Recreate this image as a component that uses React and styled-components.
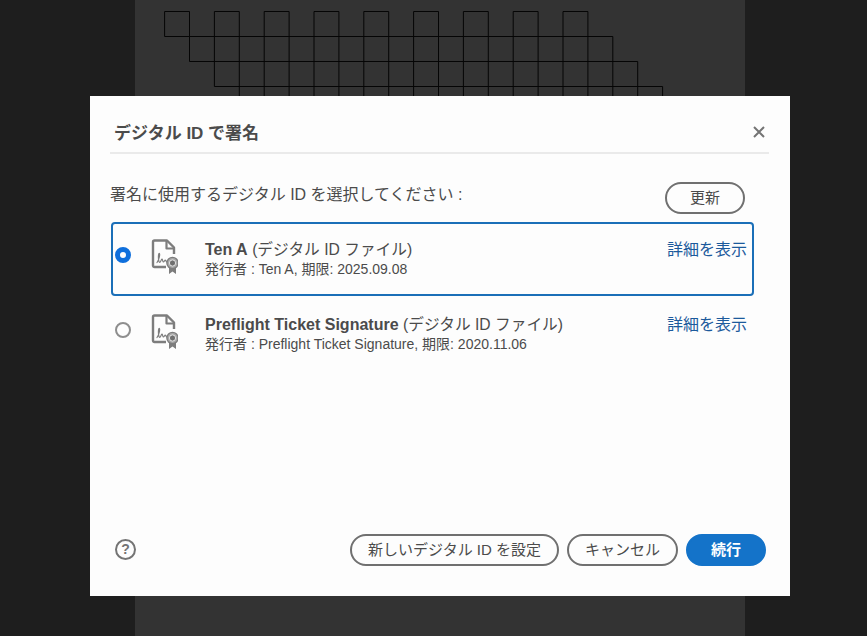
import React from "react";
import styled, { createGlobalStyle } from "styled-components";

const Global = createGlobalStyle`
  html, body { margin: 0; padding: 0; height: 100%; background: #1e1e1e; overflow: hidden; }
  body { font-family: "Liberation Sans", "Noto Sans CJK JP", sans-serif; color: #4b4b4b; }
  #root { height: 100%; }
`;

const Stage = styled.div`
  position: relative;
  width: 867px;
  height: 636px;
  background: #1e1e1e;
  overflow: hidden;
`;
const Page = styled.div`
  width: 610px;
  height: 636px;
  margin-left: 135px;
  background: #333333;
`;
const Sheet = styled.svg`
  display: block;
`;
const Modal = styled.div`
  position: absolute;
  left: 90px;
  top: 96px;
  width: 700px;
  height: 500px;
  background: #fdfdfd;
  display: flex;
  flex-direction: column;
  padding: 0 21px 30px 20px;
  box-sizing: border-box;
`;
const Header = styled.header`
  height: 58px;
  border-bottom: 2px solid #eaeaea;
  display: flex;
  align-items: center;
  justify-content: space-between;
  padding: 14px 2px 0 4px;
  box-sizing: border-box;
`;
const Title = styled.h1`
  margin: 0;
  font-size: 17px;
  font-weight: 700;
  color: #4b4b4b;
`;
const Close = styled.button`
  border: 0;
  background: none;
  padding: 0;
  width: 16px;
  height: 16px;
  display: flex;
  color: #747474;
  margin-top: 2px;
`;
const Prompt = styled.div`
  display: flex;
  align-items: center;
  justify-content: space-between;
  margin-top: 28px;
  padding-right: 24px;
  height: 32px;
`;
const PromptText = styled.span`
  font-size: 16px;
  color: #4b4b4b;
  margin-bottom: 10px;
`;
const Pill = styled.button`
  height: 32px;
  box-sizing: border-box;
  border-radius: 16px;
  border: 2px solid ${p => (p.$primary ? "#1473c9" : "#707070")};
  background: ${p => (p.$primary ? "#1473c9" : "#fdfdfd")};
  color: ${p => (p.$primary ? "#ffffff" : "#4b4b4b")};
  font-family: inherit;
  font-size: 15px;
  font-weight: ${p => (p.$primary ? 700 : 400)};
  width: ${p => p.$w}px;
  padding: 0 0 4px;
  white-space: nowrap;
`;
const List = styled.div`
  display: flex;
  flex-direction: column;
  gap: 1px;
  margin-top: 8px;
  flex: 1;
`;
const Row = styled.div`
  width: 643px;
  height: 74px;
  margin-left: 1px;
  box-sizing: border-box;
  border-radius: 4px;
  border: 2px solid ${p => (p.$selected ? "#1b6fb8" : "transparent")};
  display: flex;
  align-items: flex-start;
  padding: 16px 5px 0 2px;
`;
const Radio = styled.span`
  width: 16px;
  height: 16px;
  box-sizing: border-box;
  border-radius: 50%;
  margin-top: 7px;
  flex: none;
  background: #fdfdfd;
  border: ${p => (p.$on ? "5px solid #0f6fdc" : "2px solid #8e8e8e")};
`;
const Icon = styled.svg`
  flex: none;
  margin: -1px 27px 0 20px;
`;
const Info = styled.div`
  flex: 1;
  display: flex;
  flex-direction: column;
`;
const Name = styled.div`
  font-size: 16px;
  line-height: 20px;
  color: #4b4b4b;
  white-space: nowrap;
`;
const Kind = styled.span`
  font-size: 15.7px;
`;
const Strong = styled.strong`
  font-weight: 700;
`;
const Meta = styled.div`
  font-size: 14px;
  line-height: 18px;
  color: #4b4b4b;
  white-space: nowrap;
`;
const Details = styled.a`
  font-size: 16px;
  line-height: 20px;
  color: #1c5a9c;
  white-space: nowrap;
`;
const Footer = styled.footer`
  display: flex;
  align-items: center;
  gap: 8px;
  padding: 0 3px 0 5px;
`;
const Help = styled.span`
  width: 21px;
  height: 21px;
  box-sizing: border-box;
  border: 2px solid #747474;
  border-radius: 50%;
  color: #747474;
  font-size: 14px;
  font-weight: 700;
  display: flex;
  align-items: center;
  justify-content: center;
  margin: 0 auto 2px 0;
`;

const COL = 24.9;
const X0 = 29.6;
const xs = c => X0 + COL * c;
const ROWS = [11.5, 36.5, 61.5, 86.5, 111.5];

const Grid = () => {
  const d = [];
  for (let c = 0; c <= 16; c += 2) {
    d.push(`M${xs(c)} ${ROWS[0]}H${xs(c + 1)}V${ROWS[1]}H${xs(c)}Z`);
  }
  for (let r = 1; r <= 3; r++) {
    const a = r, b = r + 17;
    d.push(`M${xs(a)} ${ROWS[r]}H${xs(b)}V${ROWS[r + 1]}H${xs(a)}Z`);
    for (let c = a + 1; c < b; c++) d.push(`M${xs(c)} ${ROWS[r]}V${ROWS[r + 1]}`);
  }
  return (
    <Sheet width="610" height="110" viewBox="0 0 610 110">
      <path d={d.join("")} fill="none" stroke="#050505" strokeWidth="1" />
    </Sheet>
  );
};

const CertIcon = () => (
  <Icon width="27" height="36" viewBox="0 0 27 36" fill="none">
    <path d="M23 15V8.5L16 1.5H3.5A1.5 1.5 0 0 0 2 3V26.5A1.5 1.5 0 0 0 3.5 28H15" stroke="#7d7d7d" strokeWidth="2.4" strokeLinejoin="round" />
    <path d="M15.5 2V9.5H23" stroke="#7d7d7d" strokeWidth="2.2" strokeLinejoin="round" />
    <path d="M6 23.5C8 21 9.4 14.6 8.2 14.4C7 14.4 7.2 23.6 8.8 23.4C10 23.2 10 20 11 20.2C11.8 20.4 11.6 23.2 12.6 23C13.4 22.8 13.6 21 14.4 21.2C15 21.4 15 23 16 23" stroke="#7d7d7d" strokeWidth="1.2" strokeLinecap="round" />
    <path d="M18 28V35L21.5 32.5L25 35V28Z" fill="#7d7d7d" />
    <circle cx="21.5" cy="24" r="5.6" fill="#a8a8a8" stroke="#7d7d7d" strokeWidth="1.4" />
    <circle cx="21.5" cy="24" r="3.1" fill="#6f6f6f" stroke="#e4e4e4" strokeWidth="1" />
  </Icon>
);

const ids = [
  { name: "Ten A", meta: "発行者 : Ten A, 期限: 2025.09.08", on: true },
  { name: "Preflight Ticket Signature", meta: "発行者 : Preflight Ticket Signature, 期限: 2020.11.06", on: false },
];

export default function App() {
  return (
    <Stage>
      <Global />
      <Page>
        <Grid />
      </Page>
      <Modal>
        <Header>
          <Title>デジタル ID で署名</Title>
          <Close aria-label="閉じる">
            <svg width="16" height="16" viewBox="0 0 16 16">
              <path d="M3 3L13 13M13 3L3 13" stroke="currentColor" strokeWidth="2" />
            </svg>
          </Close>
        </Header>
        <Prompt>
          <PromptText>署名に使用するデジタル ID を選択してください :</PromptText>
          <Pill $w={80}>更新</Pill>
        </Prompt>
        <List>
          {ids.map(i => (
            <Row key={i.name} $selected={i.on}>
              <Radio $on={i.on} />
              <CertIcon />
              <Info>
                <Name>
                  <Strong>{i.name}</Strong> <Kind>(デジタル ID ファイル)</Kind>
                </Name>
                <Meta>{i.meta}</Meta>
              </Info>
              <Details>詳細を表示</Details>
            </Row>
          ))}
        </List>
        <Footer>
          <Help>?</Help>
          <Pill $w={209}>新しいデジタル ID を設定</Pill>
          <Pill $w={111}>キャンセル</Pill>
          <Pill $w={80} $primary>続行</Pill>
        </Footer>
      </Modal>
    </Stage>
  );
}
